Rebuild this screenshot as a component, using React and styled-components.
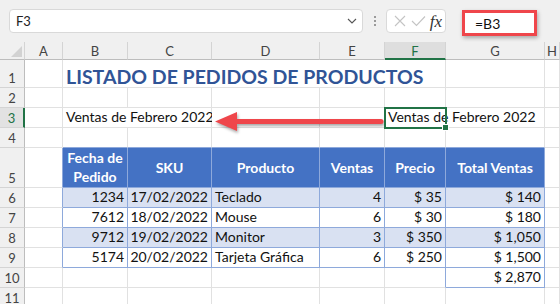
import React from "react";
import styled, { createGlobalStyle } from "styled-components";

const GlobalStyle = createGlobalStyle`
  html, body {
    margin: 0;
    padding: 0;
    background: #fff;
  }
  body {
    font-family: Lato, "Liberation Sans", sans-serif;
    overflow: hidden;
  }
`;

const GREEN = "#217346";
const GRID = "#e1e1e1";
const BLUE_LINE = "#8ea9db";

const Page = styled.div`
  position: relative;
  width: 560px;
  height: 304px;
  overflow: hidden;
  background: #fff;
`;

const FormulaBar = styled.div`
  height: 42px;
  background: #f0f0f0;
  display: flex;
  align-items: center;
  padding-left: 9px;
`;

const NameBox = styled.div`
  box-sizing: border-box;
  width: 354px;
  height: 24px;
  background: #fff;
  border: 1px solid #d9d9d9;
  border-radius: 4px;
  display: flex;
  align-items: center;
  justify-content: space-between;
  padding: 0 5px 0 6px;
  font-size: 13px;
  color: #222;
`;

const Dots = styled.div`
  width: 23px;
  display: flex;
  flex-direction: column;
  align-items: center;
  gap: 2px;
  span {
    width: 2px;
    height: 2px;
    background: #9a9a9a;
  }
`;

const FxBox = styled.div`
  box-sizing: border-box;
  width: 60px;
  height: 24px;
  background: #fff;
  border: 1px solid #dadada;
  border-radius: 4px;
  display: flex;
  align-items: center;
  justify-content: space-between;
  padding: 0 3px 0 6px;
`;

const Fx = styled.span`
  font-family: "Liberation Serif", serif;
  font-style: italic;
  font-size: 17px;
  color: #333;
  line-height: 1;
`;

const FormulaInput = styled.div`
  box-sizing: border-box;
  margin: 4px 0 0 16px;
  width: 75px;
  height: 26px;
  background: #fff;
  border: 3px solid #ef464b;
  box-shadow: 1px 2px 4px rgba(0, 0, 0, 0.3);
  display: flex;
  align-items: center;
  padding-left: 10px;
  font-size: 14px;
  color: #111;
`;

const Sheet = styled.div`
  display: grid;
  grid-template-columns: 25px 38px 65px 84px 108px 65px 61px 99px 1fr;
  grid-template-rows: 18px 28px repeat(3, 20px) 40px repeat(6, 20px);
  background: #fff;
`;

const Corner = styled.div`
  box-sizing: border-box;
  background: #f0f0f0;
  border-right: 1px solid #d4d4d4;
  border-bottom: 1px solid #bdbdbd;
  position: relative;
  &::after {
    content: "";
    position: absolute;
    right: 2px;
    bottom: 2px;
    width: 0;
    height: 0;
    border-left: 11px solid transparent;
    border-bottom: 11px solid #d2d2d2;
  }
`;

const ColHead = styled.div`
  box-sizing: border-box;
  background: ${({ $sel }) => ($sel ? "#dedede" : "#f0f0f0")};
  border-right: 1px solid #d4d4d4;
  border-bottom: ${({ $sel }) => ($sel ? `2px solid ${GREEN}` : "1px solid #bdbdbd")};
  color: ${({ $sel }) => ($sel ? GREEN : "#444")};
  font-size: 13px;
  display: flex;
  align-items: center;
  justify-content: center;
  padding-top: 1px;
`;

const RowHead = styled.div`
  box-sizing: border-box;
  background: ${({ $sel }) => ($sel ? "#e2e2e2" : "#f0f0f0")};
  border-right: ${({ $sel }) => ($sel ? `2px solid ${GREEN}` : "1px solid #bdbdbd")};
  border-bottom: 1px solid #d4d4d4;
  color: ${({ $sel }) => ($sel ? GREEN : "#444")};
  font-size: 13px;
  display: flex;
  align-items: flex-end;
  justify-content: center;
  padding-bottom: 1px;
`;

const Cell = styled.div`
  box-sizing: border-box;
  grid-column: span ${({ $span }) => $span || 1};
  border-right: 1px solid ${({ $rc }) => $rc};
  border-bottom: 1px solid ${({ $bc }) => $bc};
  background: ${({ $bg }) => $bg || "#fff"};
  color: ${({ $color }) => $color || "#111"};
  font-weight: ${({ $bold }) => ($bold ? 700 : 400)};
  font-size: ${({ $size }) => $size || 14}px;
  display: flex;
  align-items: ${({ $head }) => ($head ? "center" : "flex-end")};
  justify-content: ${({ $align }) =>
    $align === "right" ? "flex-end" : $align === "center" ? "center" : "flex-start"};
  text-align: center;
  padding: 0 3px 1px 3px;
  white-space: ${({ $head }) => ($head ? "normal" : "nowrap")};
  line-height: ${({ $head }) => ($head ? "19px" : "18px")};
  overflow: visible;
`;

const SelectedCell = styled(Cell)`
  position: relative;
  z-index: 1;
  outline: 2px solid ${GREEN};
  outline-offset: -1px;
  &::after {
    content: "";
    position: absolute;
    right: -4px;
    bottom: -4px;
    width: 5px;
    height: 5px;
    background: ${GREEN};
    border: 1px solid #fff;
  }
`;

const Arrow = styled.svg`
  position: absolute;
  left: 212px;
  top: 108px;
  filter: drop-shadow(1px 2px 1.5px rgba(0, 0, 0, 0.35));
`;

const cols = ["A", "B", "C", "D", "E", "F", "G", "H"];

const headers = ["Fecha de Pedido", "SKU", "Producto", "Ventas", "Precio", "Total Ventas"];

const orders = [
  ["1234", "17/02/2022", "Teclado", "4", "$ 35", "$ 140"],
  ["7612", "18/02/2022", "Mouse", "6", "$ 30", "$ 180"],
  ["9712", "19/02/2022", "Monitor", "3", "$ 350", "$ 1,050"],
  ["5174", "20/02/2022", "Tarjeta Gráfica", "6", "$ 250", "$ 1,500"],
];

const inTable = (r, c) => (r >= 5 && r <= 9 && c >= 1 && c <= 6) || (r === 10 && c === 6);

// special cells: [row][col] -> props
const special = {
  1: {
    1: { text: "LISTADO DE PEDIDOS DE PRODUCTOS", span: 5, bold: true, size: 19.5, color: "#305496" },
  },
  3: {
    1: { text: "Ventas de Febrero 2022", span: 2 },
    5: { text: "Ventas de Febrero 2022", selected: true },
  },
  10: {
    6: { text: "$ 2,870", align: "right" },
  },
};

headers.forEach((h, i) => {
  special[5] = special[5] || {};
  special[5][i + 1] = { text: h, head: true, bold: true, align: "center", color: "#fff", bg: "#4472c4" };
});

orders.forEach((row, ri) => {
  const r = 6 + ri;
  special[r] = {};
  row.forEach((v, i) => {
    special[r][i + 1] = {
      text: v,
      align: i === 2 ? "left" : "right",
      bg: r % 2 === 0 ? "#d9e1f2" : "#fff",
    };
  });
});

const renderRow = (r) => {
  const out = [<RowHead key={`h${r}`} $sel={r === 3}>{r}</RowHead>];
  let c = 0;
  while (c < cols.length) {
    const s = (special[r] && special[r][c]) || {};
    const span = s.span || 1;
    const last = c + span - 1;
    const rc = inTable(r, last) || inTable(r, last + 1) ? BLUE_LINE : GRID;
    const bc = inTable(r, c) || inTable(r + 1, c) ? BLUE_LINE : GRID;
    const Comp = s.selected ? SelectedCell : Cell;
    out.push(
      <Comp
        key={`${r}-${c}`}
        $span={span}
        $rc={rc}
        $bc={bc}
        $bg={s.bg}
        $color={s.color}
        $bold={s.bold}
        $size={s.size}
        $head={s.head}
        $align={s.align}
      >
        {s.text}
      </Comp>
    );
    c += span;
  }
  return out;
};

const App = () => (
  <Page>
    <GlobalStyle />
    <FormulaBar>
      <NameBox>
        F3
        <svg width="10" height="6" viewBox="0 0 10 6">
          <path d="M1 1 L5 5 L9 1" fill="none" stroke="#555" strokeWidth="1.1" />
        </svg>
      </NameBox>
      <Dots>
        <span />
        <span />
        <span />
      </Dots>
      <FxBox>
        <svg width="14" height="14" viewBox="0 0 14 14">
          <path d="M2 2 L12 12 M12 2 L2 12" stroke="#c4c4c4" strokeWidth="1.1" />
        </svg>
        <svg width="15" height="12" viewBox="0 0 15 12">
          <path d="M1 6 L5.5 10.5 L14 1.5" fill="none" stroke="#c4c4c4" strokeWidth="1.1" />
        </svg>
        <Fx>fx</Fx>
      </FxBox>
      <FormulaInput>=B3</FormulaInput>
    </FormulaBar>
    <Sheet>
      <Corner />
      {cols.map((l) => (
        <ColHead key={l} $sel={l === "F"}>
          {l}
        </ColHead>
      ))}
      {Array.from({ length: 11 }, (_, i) => renderRow(i + 1))}
    </Sheet>
    <Arrow width="176" height="28" viewBox="0 0 176 28">
      <line x1="22" y1="13.5" x2="169" y2="13.5" stroke="#ef464b" strokeWidth="5" strokeLinecap="round" />
      <polygon points="3,13.5 25,4 25,23" fill="#ef464b" />
    </Arrow>
  </Page>
);

export default App;
